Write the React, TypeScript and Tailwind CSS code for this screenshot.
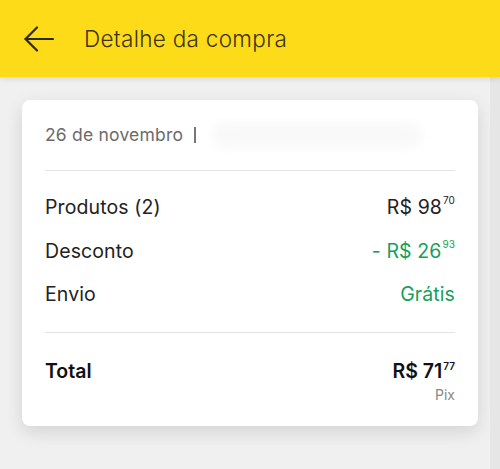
import React from "react";

type Row = { label: string; whole: string; cents: string; green?: boolean };

const ROWS: Row[] = [
  { label: "Produtos (2)", whole: "R$ 98", cents: "70" },
  { label: "Desconto", whole: "- R$ 26", cents: "93", green: true },
  { label: "Envio", whole: "Grátis", cents: "", green: true },
];

function Price({ whole, cents, bold }: { whole: string; cents: string; bold?: boolean }) {
  return (
    <span className={`flex items-start ${bold ? "font-semibold" : ""}`}>
      <span>{whole}</span>
      {cents && <span className="text-[10px] leading-[12px] ml-[1px] mt-[1px]">{cents}</span>}
    </span>
  );
}

export default function App() {
  return (
    <div
      className="w-[500px] h-[469px] bg-[#f0f0f0] flex flex-col overflow-hidden"
      style={{ fontFamily: "Inter, 'Noto Sans', sans-serif" }}
    >
      {/* Top bar */}
      <header className="h-[77px] shrink-0 bg-[#fedb18] flex items-center px-[24px] gap-[30px] shadow-[0_2px_6px_rgba(0,0,0,0.1)] z-10">
        <svg width="30" height="26" viewBox="0 0 30 26" fill="none" stroke="#2e2a1a" strokeWidth="2.2" strokeLinecap="round" strokeLinejoin="round">
          <path d="M1.5 13H29" />
          <path d="M13 1.5L1.5 13L13 24.5" />
        </svg>
        <h1 className="text-[22.5px] font-light text-[#3d3512] tracking-[0.3px]">Detalhe da compra</h1>
      </header>

      <div className="flex flex-1">
        <main className="flex-1 pl-[22px] pr-[12px] pt-[23px]">
          <div className="bg-white rounded-[8px] shadow-[0_6px_18px_rgba(0,0,0,0.12)] px-[23px] pt-[24px] pb-[22px]">
            {/* Date line */}
            <div className="flex items-center h-[22px] text-[17.5px] text-[#6b6b6b] tracking-[0.2px]">
              <span>26 de novembro</span>
              <span className="ml-[11px] w-[1.5px] h-[16px] bg-[#777]" />
              <div className="ml-[16px] w-[210px] h-[26px] rounded-full bg-[#f9f9f9] blur-[5px]" />
            </div>
            <div className="mt-[24px] h-[1px] bg-[#e3e3e3]" />

            {/* Rows */}
            <div className="pt-[25px] pb-[25px] flex flex-col gap-[19.5px]">
              {ROWS.map((r) => (
                <div key={r.label} className="flex justify-between items-center h-[24px] text-[19.5px] text-[#222] tracking-[0.1px]">
                  <span>{r.label}</span>
                  <span className={r.green ? "text-[#16a05a]" : "text-[#222]"}>
                    <Price whole={r.whole} cents={r.cents} />
                  </span>
                </div>
              ))}
            </div>
            <div className="h-[1px] bg-[#e3e3e3]" />

            {/* Total */}
            <div className="pt-[26px] flex justify-between text-[19.5px] text-[#111]">
              <span className="font-semibold leading-[24px]">Total</span>
              <div className="flex flex-col items-end">
                <span className="leading-[24px]">
                  <Price whole="R$ 71" cents="77" bold />
                </span>
                <span className="mt-[3px] text-[14px] leading-[18px] text-[#888]">Pix</span>
              </div>
            </div>
          </div>
        </main>
        <div className="w-[10px] bg-[#e6e6e6]" />
      </div>
    </div>
  );
}
